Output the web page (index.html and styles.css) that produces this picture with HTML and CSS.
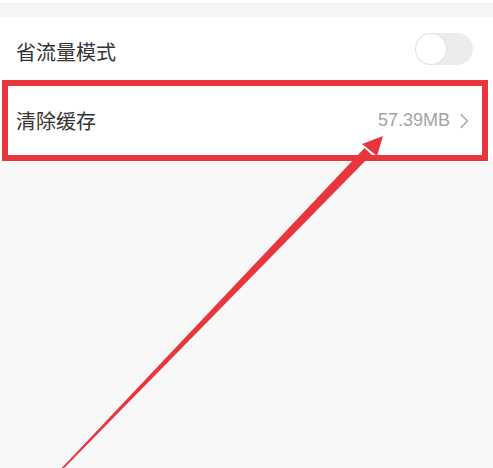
FILE: index.html
```html
<!DOCTYPE html>
<html lang="zh-CN">
<head>
<meta charset="utf-8">
<title>设置</title>
<link rel="stylesheet" href="styles.css">
</head>
<body>
<div class="page">
  <div class="top-band"></div>
  <div class="settings">
    <div class="row">
      <span class="label">省流量模式</span>
      <span class="toggle"><span class="knob"></span></span>
    </div>
    <div class="row row-marked">
      <span class="label">清除缓存</span>
      <span class="value">57.39MB
        <svg class="chev" width="10" height="16" viewBox="0 0 10 16"><path d="M2 1.5 L8.5 8 L2 14.5" fill="none" stroke="#a8a8a8" stroke-width="1.6" stroke-linecap="round" stroke-linejoin="round"/></svg>
      </span>
    </div>
  </div>
  <svg class="arrow" width="493" height="468" viewBox="0 0 493 468">
    <polygon points="383,136 362,144 377,156" fill="#e8363c"/>
    <polygon points="364.5,148 371.5,154.5 63.2,469 60.8,469" fill="#e8363c"/>
  </svg>
</div>
</body>
</html>
```
FILE: styles.css
```css
html, body {
  margin: 0;
  padding: 0;
}
body {
  background: #f8f8f8;
  font-family: "Noto Sans CJK SC", "Noto Sans", sans-serif;
}
.page {
  position: relative;
  width: 493px;
  height: 468px;
  overflow: hidden;
}
.top-band {
  height: 14px;
  border-top: 3px solid #ffffff;
  background: #f5f5f5;
}
.settings {
  background: #ffffff;
  display: flex;
  flex-direction: column;
}
.row {
  display: flex;
  align-items: center;
  justify-content: space-between;
  height: 63px;
  padding: 0 20px 0 16px;
}
.label {
  font-size: 20px;
  color: #333333;
  line-height: 1;
}
.row:first-child .label {
  margin-top: 6px;
}
.toggle {
  width: 58px;
  height: 32px;
  border-radius: 16px;
  background: #ececec;
  display: flex;
  align-items: center;
  padding-left: 1px;
  box-sizing: border-box;
}
.knob {
  width: 30px;
  height: 30px;
  border-radius: 50%;
  background: #ffffff;
  box-shadow: 0 0 0 1px #e2e2e2;
}
.row-marked {
  height: 81px;
  box-sizing: border-box;
  border: 6px solid #e8363c;
  margin: 0 5px 0 2px;
  padding: 0 13px 0 8px;
}
.value {
  display: flex;
  align-items: center;
  gap: 9px;
  font-family: "Liberation Sans", Arial, sans-serif;
  font-size: 18px;
  color: #a3a3a3;
}
.chev {
  display: block;
}
.arrow {
  position: absolute;
  left: 0;
  top: 0;
}
```
